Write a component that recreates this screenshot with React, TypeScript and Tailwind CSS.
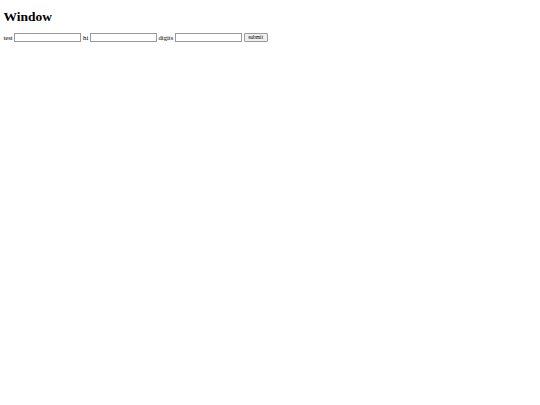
export default function App() {
  return (
    <div className="min-h-[405px] bg-white px-[3.4px] py-px font-['Liberation_Serif',serif] text-black">
      <h1 className="mt-[8px] mb-[8px] text-[13.5px] leading-[15.5px] font-bold">Window</h1>
      <form className="flex items-center text-[6.7px] leading-[9px]" onSubmit={(e) => e.preventDefault()}>
        <span>test</span>
        <input className="ml-[1.7px] h-[9px] w-[67px] border border-[#9a9a9a] bg-white" />
        <span className="ml-[1.7px]">hi</span>
        <input className="ml-[1.7px] h-[9px] w-[67px] border border-[#9a9a9a] bg-white" />
        <span className="ml-[1.5px]">digits</span>
        <input className="ml-[1.7px] h-[9px] w-[67px] border border-[#9a9a9a] bg-white" />
        <button
          type="submit"
          className="ml-[1.7px] h-[9px] w-[24px] rounded-[1px] border border-[#9a9a9a] bg-[#efefef] text-[5.5px] leading-[7px] text-black"
        >
          submit
        </button>
      </form>
    </div>
  );
}
